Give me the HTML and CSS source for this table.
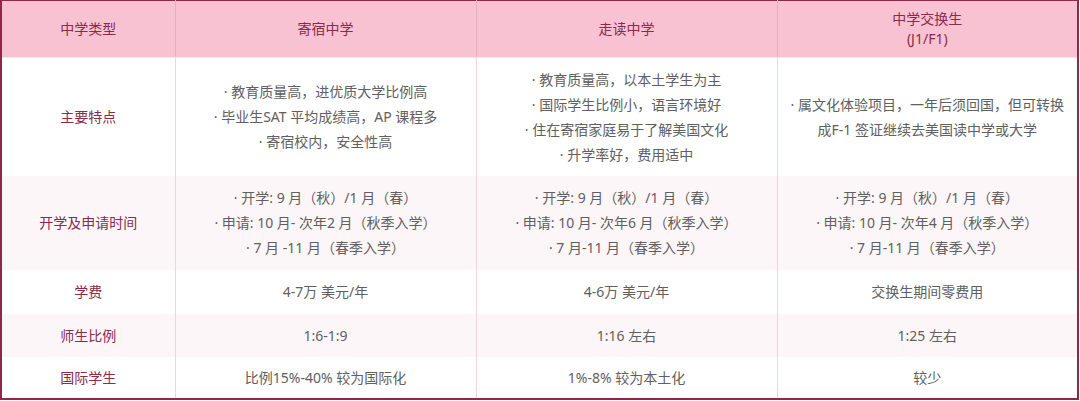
FILE: index.html
```html
<!DOCTYPE html>
<html lang="zh">
<head>
<meta charset="utf-8">
<title>中学类型对比</title>
<link rel="stylesheet" href="styles.css">
</head>
<body>
<table class="cmp">
  <colgroup>
    <col class="c-label">
    <col class="c-data">
    <col class="c-data">
    <col class="c-data">
  </colgroup>
  <thead>
    <tr class="r-head">
      <th>中学类型</th>
      <th>寄宿中学</th>
      <th>走读中学</th>
      <th>中学交换生<br>(J1/F1)</th>
    </tr>
  </thead>
  <tbody>
    <tr class="r-feat">
      <td class="lbl">主要特点</td>
      <td>· 教育质量高，进优质大学比例高<br>· 毕业生SAT 平均成绩高，AP 课程多<br>· 寄宿校内，安全性高</td>
      <td>· 教育质量高，以本土学生为主<br>· 国际学生比例小，语言环境好<br>· 住在寄宿家庭易于了解美国文化<br>· 升学率好，费用适中</td>
      <td>· 属文化体验项目，一年后须回国，但可转换<br>成F-1 签证继续去美国读中学或大学</td>
    </tr>
    <tr class="r-time alt">
      <td class="lbl">开学及申请时间</td>
      <td>· 开学: 9 月（秋）/1 月（春）<br>· 申请: 10 月- 次年2 月（秋季入学）<br>· 7 月 -11 月（春季入学）</td>
      <td>· 开学: 9 月（秋）/1 月（春）<br>· 申请: 10 月- 次年6 月（秋季入学）<br>· 7 月-11 月（春季入学）</td>
      <td>· 开学: 9 月（秋）/1 月（春）<br>· 申请: 10 月- 次年4 月（秋季入学）<br>· 7 月-11 月（春季入学）</td>
    </tr>
    <tr class="r-fee">
      <td class="lbl">学费</td>
      <td>4-7万 美元/年</td>
      <td>4-6万 美元/年</td>
      <td>交换生期间零费用</td>
    </tr>
    <tr class="r-ratio alt">
      <td class="lbl">师生比例</td>
      <td>1:6-1:9</td>
      <td>1:16 左右</td>
      <td>1:25 左右</td>
    </tr>
    <tr class="r-intl">
      <td class="lbl">国际学生</td>
      <td>比例15%-40% 较为国际化</td>
      <td>1%-8% 较为本土化</td>
      <td>较少</td>
    </tr>
  </tbody>
</table>
</body>
</html>
```

FILE: styles.css
```css
html, body {
  margin: 0;
  padding: 0;
  background: #ffffff;
}

body {
  font-family: "Noto Sans", "Noto Sans CJK SC", sans-serif;
  font-size: 14px;
  color: #606060;
}

.cmp {
  width: 1079px;
  table-layout: fixed;
  border-collapse: collapse;
  border-top: 1px solid #8e2748;
  border-left: 2px solid #8e2748;
  border-right: 2px solid #8e2748;
  border-bottom: 2px solid #8e2748;
}

.c-label { width: 174px; }
.c-data { width: 301px; }

.cmp th,
.cmp td {
  padding: 0 6px;
  text-align: center;
  vertical-align: middle;
  border-left: 1px solid #f1d3dc;
}

.cmp th:first-child,
.cmp td:first-child {
  border-left: none;
}

.cmp th {
  background: #f8c2d2;
  color: #8a2b4c;
  font-weight: normal;
  line-height: 20px;
  border-left-color: #e7aec0;
  border-bottom: 1px solid #fbe3ea;
}

.cmp td {
  line-height: 25px;
}

.cmp td.lbl {
  color: #8a2b4c;
}

.alt td {
  background: #fdf6f8;
}

.r-head { height: 57px; }
.r-feat { height: 118px; }
.r-time { height: 94px; }
.r-fee { height: 44px; }
.r-ratio { height: 43px; }
.r-intl { height: 42px; }
```
